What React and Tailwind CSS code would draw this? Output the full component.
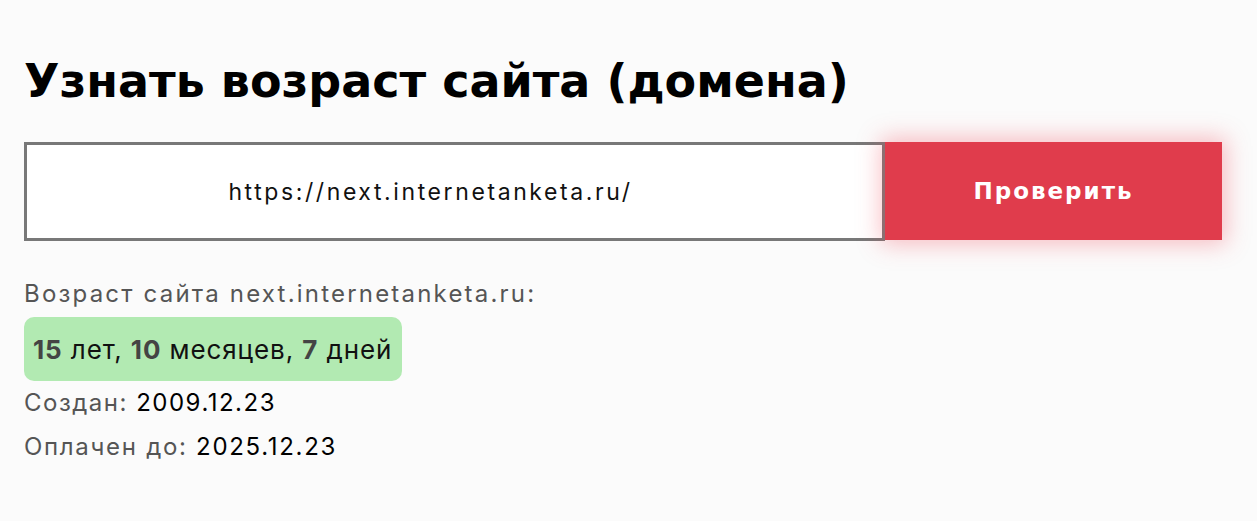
import React from 'react';

export default function App() {
  return (
    <div className="min-h-screen bg-[#fbfbfb] font-['Inter','Noto_Sans',sans-serif]">
      <div className="px-6 pt-[53px]">
        <h1 className="font-['DejaVu_Sans',sans-serif] text-[46px] leading-[56px] font-bold text-black">
          Узнать возраст сайта (домена)
        </h1>

        <div className="flex mt-[33px] w-[1198px]">
          <input
            type="text"
            defaultValue="https://next.internetanketa.ru/"
            className="w-[861px] h-[99px] border-[3px] border-[#787878] bg-white pr-[48px] text-center text-[23px] tracking-[2.6px] text-[#111] outline-none"
          />
          <button className="w-[337px] h-[98px] bg-[#e03c4c] font-['DejaVu_Sans',sans-serif] text-white text-[23px] font-bold tracking-[2px] shadow-[0_0_22px_4px_rgba(240,70,85,0.35)]">
            Проверить
          </button>
        </div>

        <div className="mt-[35px] text-[24px] text-[#555]">
          <p className="leading-[36px] tracking-[2.2px]">Возраст сайта next.internetanketa.ru:</p>
          <div className="mt-[5px] inline-flex items-center h-[64px] pl-[9px] pr-[10px] rounded-[10px] bg-[#b2eab2] text-[26px] tracking-[0.9px] text-[#111]">
            <span>
              <b className="text-[#444]">15</b> лет, <b className="text-[#444]">10</b> месяцев,{' '}
              <b className="text-[#444]">7</b> дней
            </span>
          </div>
          <p className="leading-[44px] tracking-[1.5px]">
            Создан: <span className="text-black">2009.12.23</span>
          </p>
          <p className="leading-[44px] tracking-[1.7px]">
            Оплачен до: <span className="text-black">2025.12.23</span>
          </p>
        </div>
      </div>
    </div>
  );
}
